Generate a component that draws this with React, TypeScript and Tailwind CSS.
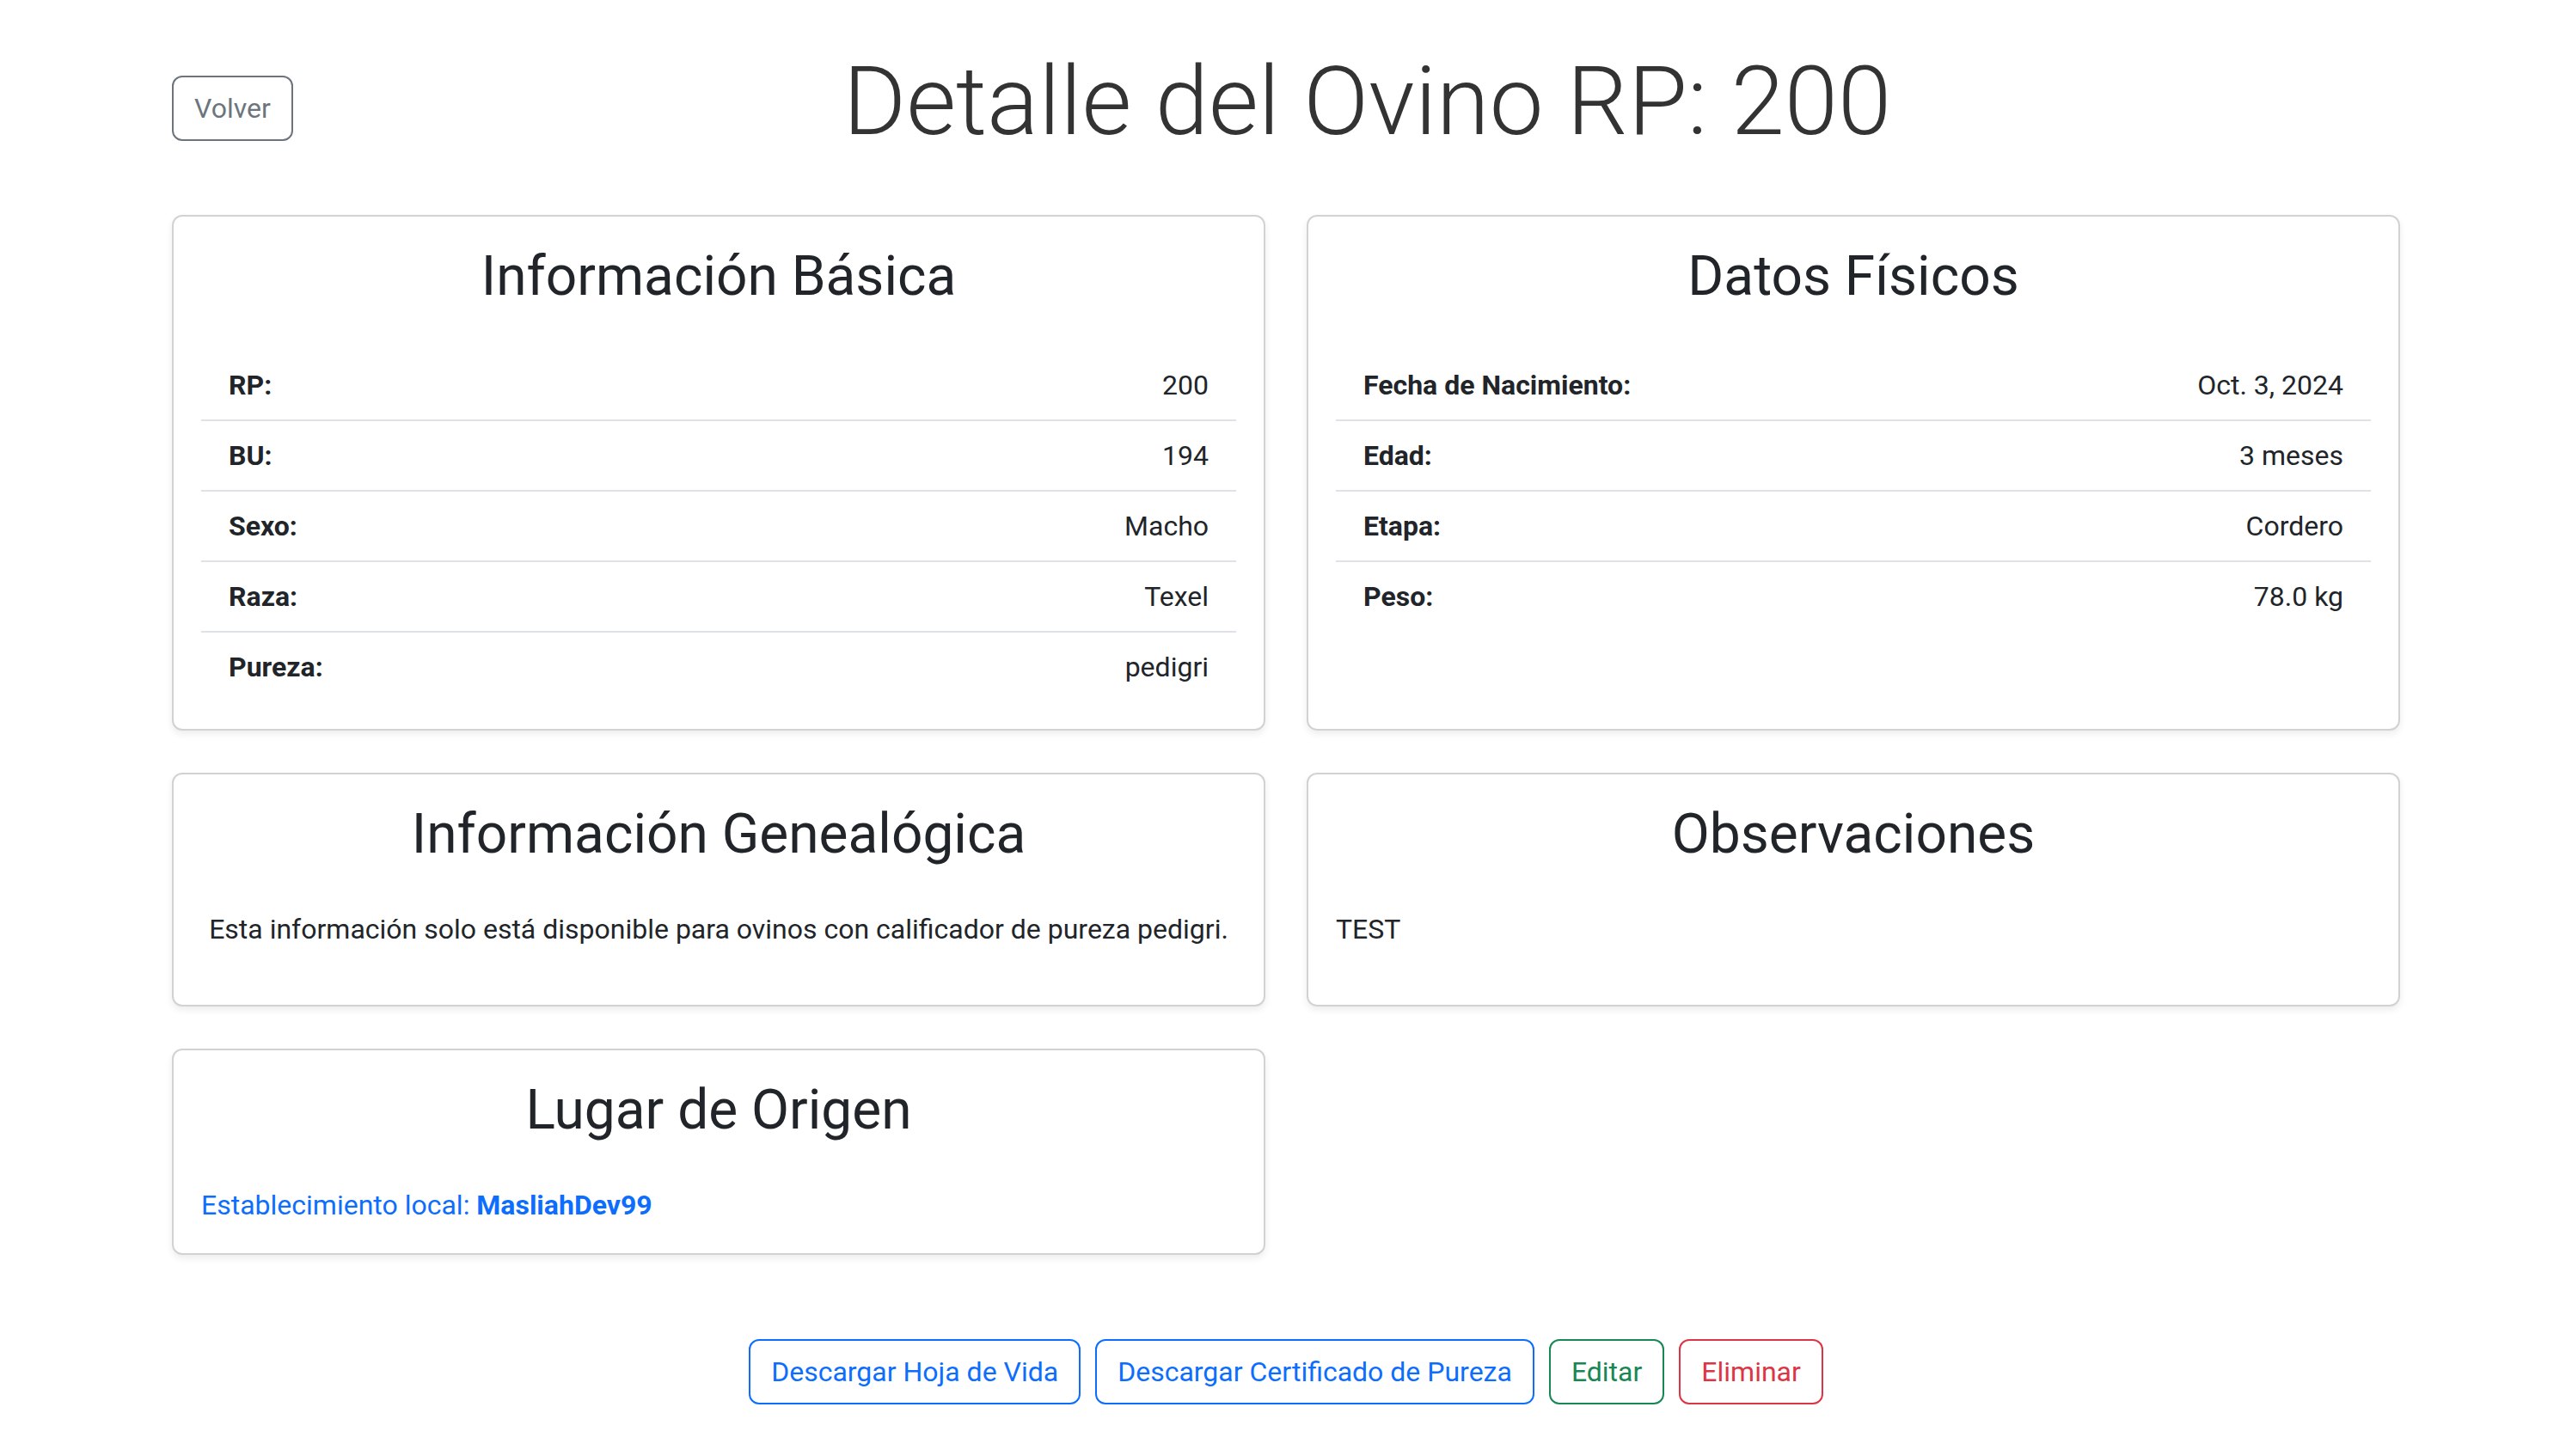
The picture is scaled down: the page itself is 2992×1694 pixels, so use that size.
const basicInfo = [
  { label: 'RP:', value: '200' },
  { label: 'BU:', value: '194' },
  { label: 'Sexo:', value: 'Macho' },
  { label: 'Raza:', value: 'Texel' },
  { label: 'Pureza:', value: 'pedigri' },
];

const physicalData = [
  { label: 'Fecha de Nacimiento:', value: 'Oct. 3, 2024' },
  { label: 'Edad:', value: '3 meses' },
  { label: 'Etapa:', value: 'Cordero' },
  { label: 'Peso:', value: '78.0 kg' },
];

function Card({ title, children }: { title: string; children: React.ReactNode }) {
  return (
    <div className="h-full rounded-[12px] border-2 border-[#d2d2d2] bg-white p-[32px] shadow-[0_4px_8px_rgba(0,0,0,0.075)]">
      <h2 className="mb-[48px] text-center text-[64px] leading-[76px] font-normal text-[#212529]">{title}</h2>
      {children}
    </div>
  );
}

function InfoList({ rows }: { rows: { label: string; value: string }[] }) {
  return (
    <ul>
      {rows.map((row) => (
        <li
          key={row.label}
          className="flex items-center justify-between border-b-2 border-[#dee2e6] px-[32px] py-[16px] text-[32px] leading-[48px] last:border-b-0"
        >
          <span className="font-bold">{row.label}</span>
          <span>{row.value}</span>
        </li>
      ))}
    </ul>
  );
}

export default function App() {
  return (
    <div className="min-h-screen bg-white font-['Roboto',sans-serif] text-[#212529]">
      <div className="mx-auto max-w-[2640px] px-[24px] pt-[48px] pb-[60px]">
        {/* Header */}
        <div className="mb-[62px] flex items-start">
          <button className="mt-[40px] rounded-[12px] border-2 border-[#6c757d] px-[24px] py-[12px] text-[32px] leading-[48px] text-[#6c757d]">
            Volver
          </button>
          <h1 className="ml-[48px] flex-1 text-center text-[112px] leading-[140px] font-light text-[#333333]">
            Detalle del Ovino RP: 200
          </h1>
        </div>

        <div className="grid grid-cols-2 gap-x-[48px] gap-y-[49px]">
          <Card title="Información Básica">
            <InfoList rows={basicInfo} />
          </Card>
          <Card title="Datos Físicos">
            <InfoList rows={physicalData} />
          </Card>

          <Card title="Información Genealógica">
            <p className="mb-[32px] text-center text-[32px] leading-[48px]">
              Esta información solo está disponible para ovinos con calificador de pureza pedigri.
            </p>
          </Card>
          <Card title="Observaciones">
            <p className="mb-[32px] text-[32px] leading-[48px]">TEST</p>
          </Card>

          <Card title="Lugar de Origen">
            <p className="text-[32px] leading-[48px] text-[#0d6efd]">
              Establecimiento local: <strong className="font-bold">MasliahDev99</strong>
            </p>
          </Card>
        </div>

        {/* Actions */}
        <div className="mt-[98px] flex justify-center gap-[17px]">
          <button className="rounded-[12px] border-2 border-[#0d6efd] px-[24px] py-[12px] text-[32px] leading-[48px] text-[#0d6efd]">
            Descargar Hoja de Vida
          </button>
          <button className="rounded-[12px] border-2 border-[#0d6efd] px-[24px] py-[12px] text-[32px] leading-[48px] text-[#0d6efd]">
            Descargar Certificado de Pureza
          </button>
          <button className="rounded-[12px] border-2 border-[#198754] px-[24px] py-[12px] text-[32px] leading-[48px] text-[#198754]">
            Editar
          </button>
          <button className="rounded-[12px] border-2 border-[#dc3545] px-[24px] py-[12px] text-[32px] leading-[48px] text-[#dc3545]">
            Eliminar
          </button>
        </div>
      </div>
    </div>
  );
}
